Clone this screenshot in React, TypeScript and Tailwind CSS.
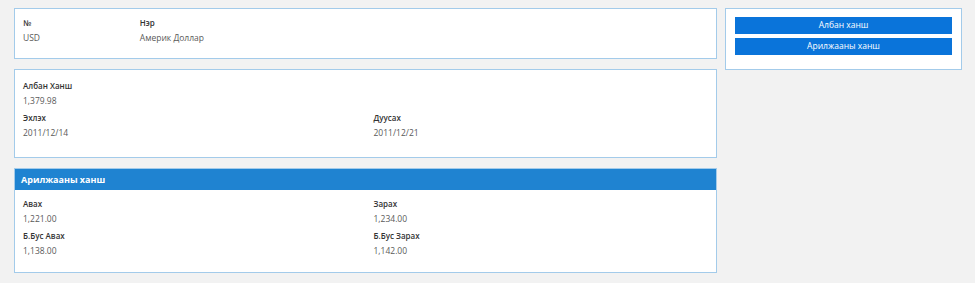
const font = { fontFamily: '"Open Sans", "Noto Sans", sans-serif' };

interface Field {
  label: string;
  value: string;
}

const Item = ({ label, value, first }: Field & { first?: boolean }) => (
  <div className={first ? '' : 'mt-[2px]'}>
    <div className="text-[8px] font-semibold leading-[15px] text-[#333]">{label}</div>
    <div className="text-[8.5px] leading-[15px] text-[#5a5a5a]">{value}</div>
  </div>
);

const Column = ({ fields }: { fields: Field[] }) => (
  <div className="px-2">
    {fields.map((f, i) => (
      <Item key={f.label} label={f.label} value={f.value} first={i === 0} />
    ))}
  </div>
);

export default function App() {
  return (
    <div className="min-h-[283px] w-full bg-[#f2f2f2] pl-[14px] pr-[13px] pt-2" style={font}>
      <div className="flex items-start gap-2">
        {/* left column */}
        <div className="flex flex-1 flex-col gap-[10px]">
          <div className="grid h-[51px] grid-cols-6 border border-[#a3cbea] bg-white pt-[6px]">
            <Column fields={[{ label: '№', value: 'USD' }]} />
            <div className="col-span-5">
              <Column fields={[{ label: 'Нэр', value: 'Америк Доллар' }]} />
            </div>
          </div>

          <div className="grid h-[89px] grid-cols-2 border border-[#a3cbea] bg-white pt-2">
            <Column
              fields={[
                { label: 'Албан Ханш', value: '1,379.98' },
                { label: 'Эхлэх', value: '2011/12/14' },
              ]}
            />
            <div className="px-2 pt-[32px]">
              <Item label="Дуусах" value="2011/12/21" first />
            </div>
          </div>

          <div className="h-[105px] border border-[#a3cbea] bg-white">
            <div className="flex h-[21px] items-center bg-[#1f83d1] px-[6px] text-[9px] font-bold text-white">
              Арилжааны ханш
            </div>
            <div className="grid grid-cols-2 pt-[6px]">
              <Column
                fields={[
                  { label: 'Авах', value: '1,221.00' },
                  { label: 'Б.Бус Авах', value: '1,138.00' },
                ]}
              />
              <Column
                fields={[
                  { label: 'Зарах', value: '1,234.00' },
                  { label: 'Б.Бус Зарах', value: '1,142.00' },
                ]}
              />
            </div>
          </div>
        </div>

        {/* right column */}
        <div className="flex h-[62px] w-[237px] flex-col gap-1 border border-[#a3cbea] bg-white px-[9px] pt-2">
          <button className="h-[17px] w-full bg-[#0a74da] text-[8.5px] text-white">Албан ханш</button>
          <button className="h-[17px] w-full bg-[#0a74da] text-[8.5px] text-white">Арилжааны ханш</button>
        </div>
      </div>
    </div>
  );
}
